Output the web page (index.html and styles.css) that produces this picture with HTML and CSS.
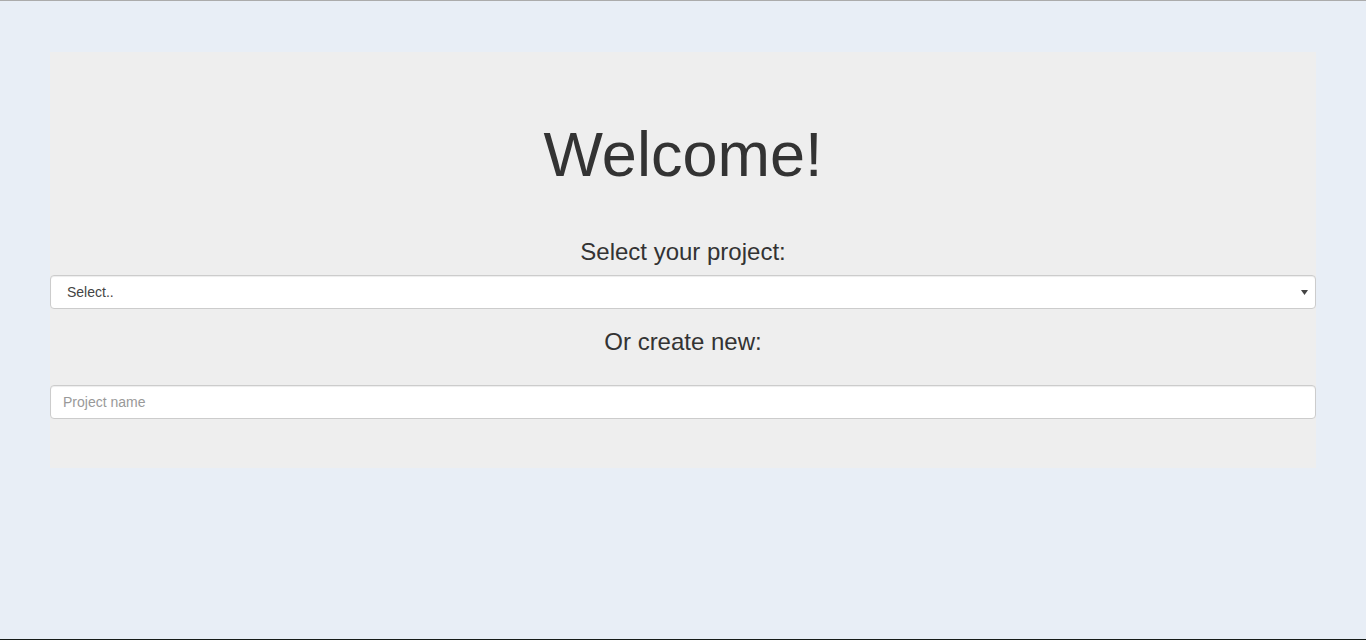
FILE: index.html
```html
<!DOCTYPE html>
<html lang="en">
<head>
  <meta charset="UTF-8" />
  <meta name="viewport" content="width=device-width, initial-scale=1.0" />
  <title>Welcome</title>
  <link rel="stylesheet" href="styles.css">
</head>
<body>
  <div class="jumbotron">
    <h1>Welcome!</h1>

    <h3>Select your project:</h3>
    <div class="select-wrap">
      <select class="form-control select" id="projectSelect">
        <option>Select..</option>
      </select>
      <svg class="caret" width="7" height="5" viewBox="0 0 7 5"><path d="M0 0H7L3.5 5Z" fill="#444"/></svg>
    </div>

    <h3 class="or-new">Or create new:</h3>
    <input type="text" class="form-control" id="projectName" placeholder="Project name" />
  </div>
</body>
</html>
```

FILE: styles.css
```css
* {
  box-sizing: border-box;
}
html, body {
  height: 100%;
}
body {
  margin: 0;
  font-family: "Liberation Sans", Arial, Helvetica, sans-serif;
  font-size: 14px;
  color: #333;
  background: #e8eef6;
  border-top: 1px solid #ababab;
  border-bottom: 1px solid #151a18;
}
.jumbotron {
  margin: 51px 50px 0;
  padding: 48px 0 49px;
  background: #eee;
  text-align: center;
}
h1 {
  font-size: 63px;
  font-weight: 400;
  line-height: 69px;
  margin: 20px 0 50px;
  color: #333;
}
h3 {
  font-size: 24px;
  font-weight: 400;
  line-height: 26px;
  margin: 0 0 10px;
  color: #333;
}
h3.or-new {
  margin: 20px 0 30px;
}
.form-control {
  display: block;
  width: 100%;
  height: 34px;
  padding: 6px 12px;
  font-family: inherit;
  font-size: 14px;
  line-height: 20px;
  color: #555;
  background: #fff;
  border: 1px solid #ccc;
  border-radius: 4px;
  box-shadow: inset 0 1px 1px rgba(0,0,0,0.075);
  text-align: left;
}
.form-control::placeholder {
  color: #999;
}
.select-wrap {
  position: relative;
}
.select {
  appearance: none;
  -webkit-appearance: none;
  padding-left: 16px;
  color: #444;
}
.caret {
  position: absolute;
  right: 8px;
  top: 15px;
  pointer-events: none;
}
```
